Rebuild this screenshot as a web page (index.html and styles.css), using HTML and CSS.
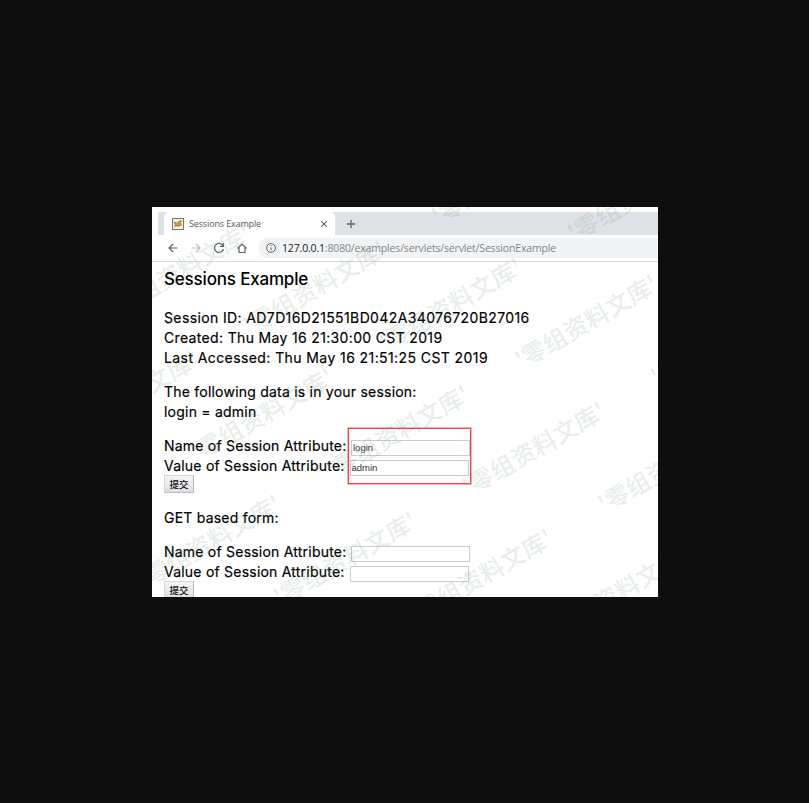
FILE: index.html
```html
<!DOCTYPE html>
<html lang="en">
<head>
<meta charset="utf-8">
<title>Sessions Example</title>
<link rel="stylesheet" href="styles.css">
</head>
<body>
<main class="window">
  <header class="tabs">
    <div class="tab">
      <svg class="favicon" viewBox="0 0 12 12"><rect x=".5" y=".5" width="11" height="11" fill="#f4f2ea" stroke="#777"/><path d="M1.5 3l2 1.5L6 4l3-2 1.5 1L9 5l1.5 3-2-.5L6 9l-2-1-2 2 .5-3z" fill="#d0a545"/><path d="M2 4l2 1M6 5l3-3M3 8l2-1 3 1M8 5l1 2" stroke="#7d6845" stroke-width=".8" fill="none"/></svg>
      <span class="tab-title">Sessions Example</span>
      <svg class="close" viewBox="0 0 8 8"><path d="M1.3 1.3l5.4 5.4M6.7 1.3L1.3 6.7" stroke="#5f6368" stroke-width="1.2"/></svg>
    </div>
    <svg class="plus" viewBox="0 0 10 10"><path d="M5 1v8M1 5h8" stroke="#5f6368" stroke-width="1.3"/></svg>
  </header>
  <nav class="toolbar">
    <svg class="icon" viewBox="0 0 12 12"><path d="M10.5 6H2M6 2L2 6l4 4" /></svg>
    <svg class="icon faded" viewBox="0 0 12 12"><path d="M1.5 6H10M6 2l4 4-4 4" /></svg>
    <svg class="icon" viewBox="0 0 12 12"><path d="M9.8 3.5A4.5 4.5 0 1 0 10.4 7M10.3 1v3.3H7" /></svg>
    <svg class="icon" viewBox="0 0 12 12"><path d="M1.5 6.5L6 2l4.5 4.5M3 5.5v5h6v-5" /></svg>
    <div class="address">
      <svg class="info" viewBox="0 0 10 10"><circle cx="5" cy="5" r="4.4"/><path d="M5 4.4v3M5 2.4v1"/></svg>
      <span class="url"><b>127.0.0.1</b>:8080/examples/servlets/servlet/SessionExample</span>
    </div>
  </nav>
  <section class="page">
    <h1>Sessions Example</h1>
    <div class="block details"><div class="sid">Session ID: AD7D16D21551BD042A34076720B27016</div><div class="created">Created: Thu May 16 21:30:00 CST 2019</div><div class="accessed">Last Accessed: Thu May 16 21:51:25 CST 2019</div></div>
    <div class="block"><div>The following data is in your session:</div><div>login = admin</div></div>
    <form class="block form">
      <label class="row"><span class="label name">Name of Session Attribute:</span><input value="login"></label>
      <label class="row"><span class="label value">Value of Session Attribute:</span><input value="admin"></label>
      <button type="button">提交</button>
      <i class="highlight"></i>
    </form>
    <div class="block get">GET based form:</div>
    <form class="block form">
      <label class="row"><span class="label name">Name of Session Attribute:</span><input></label>
      <label class="row"><span class="label value">Value of Session Attribute:</span><input></label>
      <button type="button">提交</button>
    </form>
  </section>
  <svg class="watermark" viewBox="0 0 506 390"></svg>
</main>
<script src="watermark.js"></script>
</body>
</html>
```
FILE: styles.css
```css
* { box-sizing: border-box; }
body { margin: 0; height: 803px; background: #0e0e0e; display: flex; justify-content: center; align-items: flex-start; padding-top: 207px; padding-left: 1px; overflow: hidden; }
.window { position: relative; width: 506px; height: 390px; background: #fff; overflow: hidden; }
.tabs { display: flex; align-items: center; height: 23px; margin: 5px 0 0 6px; background: #dee1e6; }
.tab { display: flex; align-items: center; width: 171px; height: 23px; margin-left: 6px; padding: 0 7px 0 8px; background: #fff; border-radius: 5px 5px 0 0; }
.favicon { width: 12px; height: 12px; }
.tab-title { margin-left: 5px; font: 9px/14px "Open Sans", sans-serif; letter-spacing: -.14px; color: #55595e; white-space: nowrap; }
.close { width: 8px; height: 8px; margin-left: auto; }
.plus { width: 10px; height: 10px; margin-left: 11px; }
.toolbar { display: flex; align-items: center; height: 27px; padding: 0 0 1px 15px; border-bottom: 1px solid #d9dadb; }
.icon { width: 12px; height: 12px; margin-right: 11px; fill: none; stroke: #5f6368; stroke-width: 1.2; flex: none; }
.faded { stroke: #b8babd; }
.address { display: flex; align-items: center; flex: 1; height: 20px; margin-left: -1px; padding-left: 8px; border-radius: 10px 0 0 10px; background: #f1f3f4; }
.info { width: 10px; height: 10px; fill: none; stroke: #5f6368; }
.url { margin-left: 6px; font: 10.5px/20px "Open Sans", sans-serif; letter-spacing: -.16px; color: #80868b; white-space: nowrap; }
.url b { font-weight: 400; color: #202124; }
.page { padding: 6px 0 0 12px; font: 400 14px/20px Inter, sans-serif; color: #000; letter-spacing: .22px; -webkit-text-stroke: .18px #000; }
h1 { margin: 0 0 18px; font-size: 17px; line-height: 22px; font-weight: 500; letter-spacing: -.18px; -webkit-text-stroke: 0; }
.block { margin-bottom: 14px; white-space: nowrap; }
.details { position: relative; top: -.5px; }
.sid { letter-spacing: .38px; }
.created { letter-spacing: .34px; }
.accessed { letter-spacing: .41px; }
.form { position: relative; }
.row { display: flex; align-items: center; height: 20px; }
.label { width: 187px; }
.value { width: 185.5px; }
input { width: 119px; height: 16px; margin: 3px 0 0; padding: 0 1px; border: 1px solid #ccc; background: transparent; font: 9.5px "Liberation Sans", sans-serif; color: #333; border-radius: 0; -webkit-text-stroke: 0; }
button { display: block; width: 30px; height: 18px; margin-top: -1px; padding: 0; border: 1px solid #d5d5d5; border-right-color: #bbb; border-bottom-color: #bbb; border-radius: 0; background: linear-gradient(#f5f5f5, #dedede); font: 500 9.5px/15px "Noto Sans CJK SC", sans-serif; color: #111; -webkit-text-stroke: 0; }
form.block { height: 58px; }
.highlight { position: absolute; left: 184px; top: -8px; width: 123px; height: 56px; border: 1px solid #f04444; box-shadow: 0 0 0 1px rgba(240, 68, 68, .4); }
.watermark { position: absolute; inset: 0; width: 506px; height: 390px; pointer-events: none; font: 500 24px "Noto Sans CJK SC", sans-serif; fill: rgba(75, 125, 80, .15); }
```
FILE: watermark.js
```js
const layer = document.querySelector('.watermark');
for (let row = -2; row < 4; row++) {
  for (let col = -5; col < 4; col++) {
    const x = 434.5 + col * 135.8 - row * 52.7;
    const y = 115 + col * 17 + row * 127;
    if (x < -68 || x > 574 || y < -40 || y > 430) continue;
    const text = document.createElementNS('http://www.w3.org/2000/svg', 'text');
    text.setAttribute('transform', `translate(${x} ${y}) rotate(-30)`);
    text.setAttribute('x', -80);
    text.setAttribute('y', 9);
    text.setAttribute('textLength', 160);
    text.textContent = "'零组资料文库'";
    layer.append(text);
  }
}
```
